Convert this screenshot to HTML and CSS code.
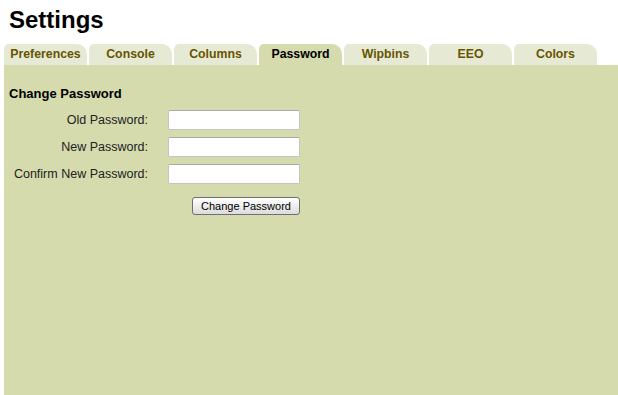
FILE: index.html
```html
<!DOCTYPE html>
<html lang="en">
<head>
  <meta charset="UTF-8">
  <title>Settings</title>
  <link rel="stylesheet" href="styles.css">
</head>
<body>
  <h1 class="page-title">Settings</h1>

  <ul class="tabs">
    <li class="tab">Preferences</li>
    <li class="tab">Console</li>
    <li class="tab">Columns</li>
    <li class="tab active">Password</li>
    <li class="tab">Wipbins</li>
    <li class="tab">EEO</li>
    <li class="tab">Colors</li>
  </ul>

  <section class="panel">
    <h2>Change Password</h2>
    <form class="pw-form" id="passwordForm">
      <label for="oldPw">Old Password:</label>
      <input type="password" id="oldPw" name="oldPw">

      <label for="newPw">New Password:</label>
      <input type="password" id="newPw" name="newPw">

      <label for="confirmPw">Confirm New Password:</label>
      <input type="password" id="confirmPw" name="confirmPw">

      <button type="submit">Change Password</button>
    </form>
  </section>
</body>
</html>
```

FILE: styles.css
```css
/* Page */
html, body {
    height: 100%;
}

body {
    margin: 0;
    display: flex;
    flex-direction: column;
    font-family: "Liberation Sans", Arial, sans-serif;
    background-color: #ffffff;
    color: #222222;
}

.page-title {
    margin: 0;
    padding: 6px 0 0 9px;
    font-size: 24px;
    line-height: 28px;
    font-weight: bold;
    color: #000000;
}

/* Tabs */
.tabs {
    list-style: none;
    margin: 10px 0 0 4px;
    padding: 0;
    display: flex;
    gap: 2px;
}

.tab {
    width: 83px;
    height: 21px;
    line-height: 21px;
    text-align: center;
    font-size: 12.3px;
    font-weight: bold;
    color: #665500;
    background-color: #e6e9d4;
    border-radius: 5px 10px 0 0;
    cursor: pointer;
}

.tab.active {
    background-color: #d5dbad;
    color: #000000;
}

/* Panel */
.panel {
    flex: 1;
    margin-left: 4px;
    padding: 21px 5px 0 5px;
    background-color: #d5dbad;
}

.panel h2 {
    margin: 0 0 8px 0;
    font-size: 13px;
    line-height: 16px;
    font-weight: bold;
    color: #000000;
}

.pw-form {
    display: grid;
    grid-template-columns: 139px 132px;
    grid-auto-rows: 20px;
    column-gap: 20px;
    row-gap: 7px;
    align-items: center;
}

.pw-form label {
    text-align: right;
    font-size: 12.5px;
    color: #222222;
}

.pw-form input {
    width: 132px;
    height: 20px;
    box-sizing: border-box;
    margin: 0;
    padding: 1px 3px;
    border: 1px solid #c4c4c4;
    border-top-color: #a9a9a9;
    border-radius: 2px;
    background-color: #ffffff;
}

.pw-form button {
    grid-column: 2;
    justify-self: end;
    align-self: start;
    width: 108px;
    height: 18px;
    margin: 6px 0 0 0;
    padding: 0;
    font-family: "Liberation Sans", Arial, sans-serif;
    font-size: 11px;
    color: #000000;
    background: linear-gradient(#ffffff, #dcdcdc);
    border: 1px solid #707070;
    border-radius: 3px;
    cursor: pointer;
}

.pw-form button:hover {
    background: linear-gradient(#ffffff, #e8e8e8);
}
```
